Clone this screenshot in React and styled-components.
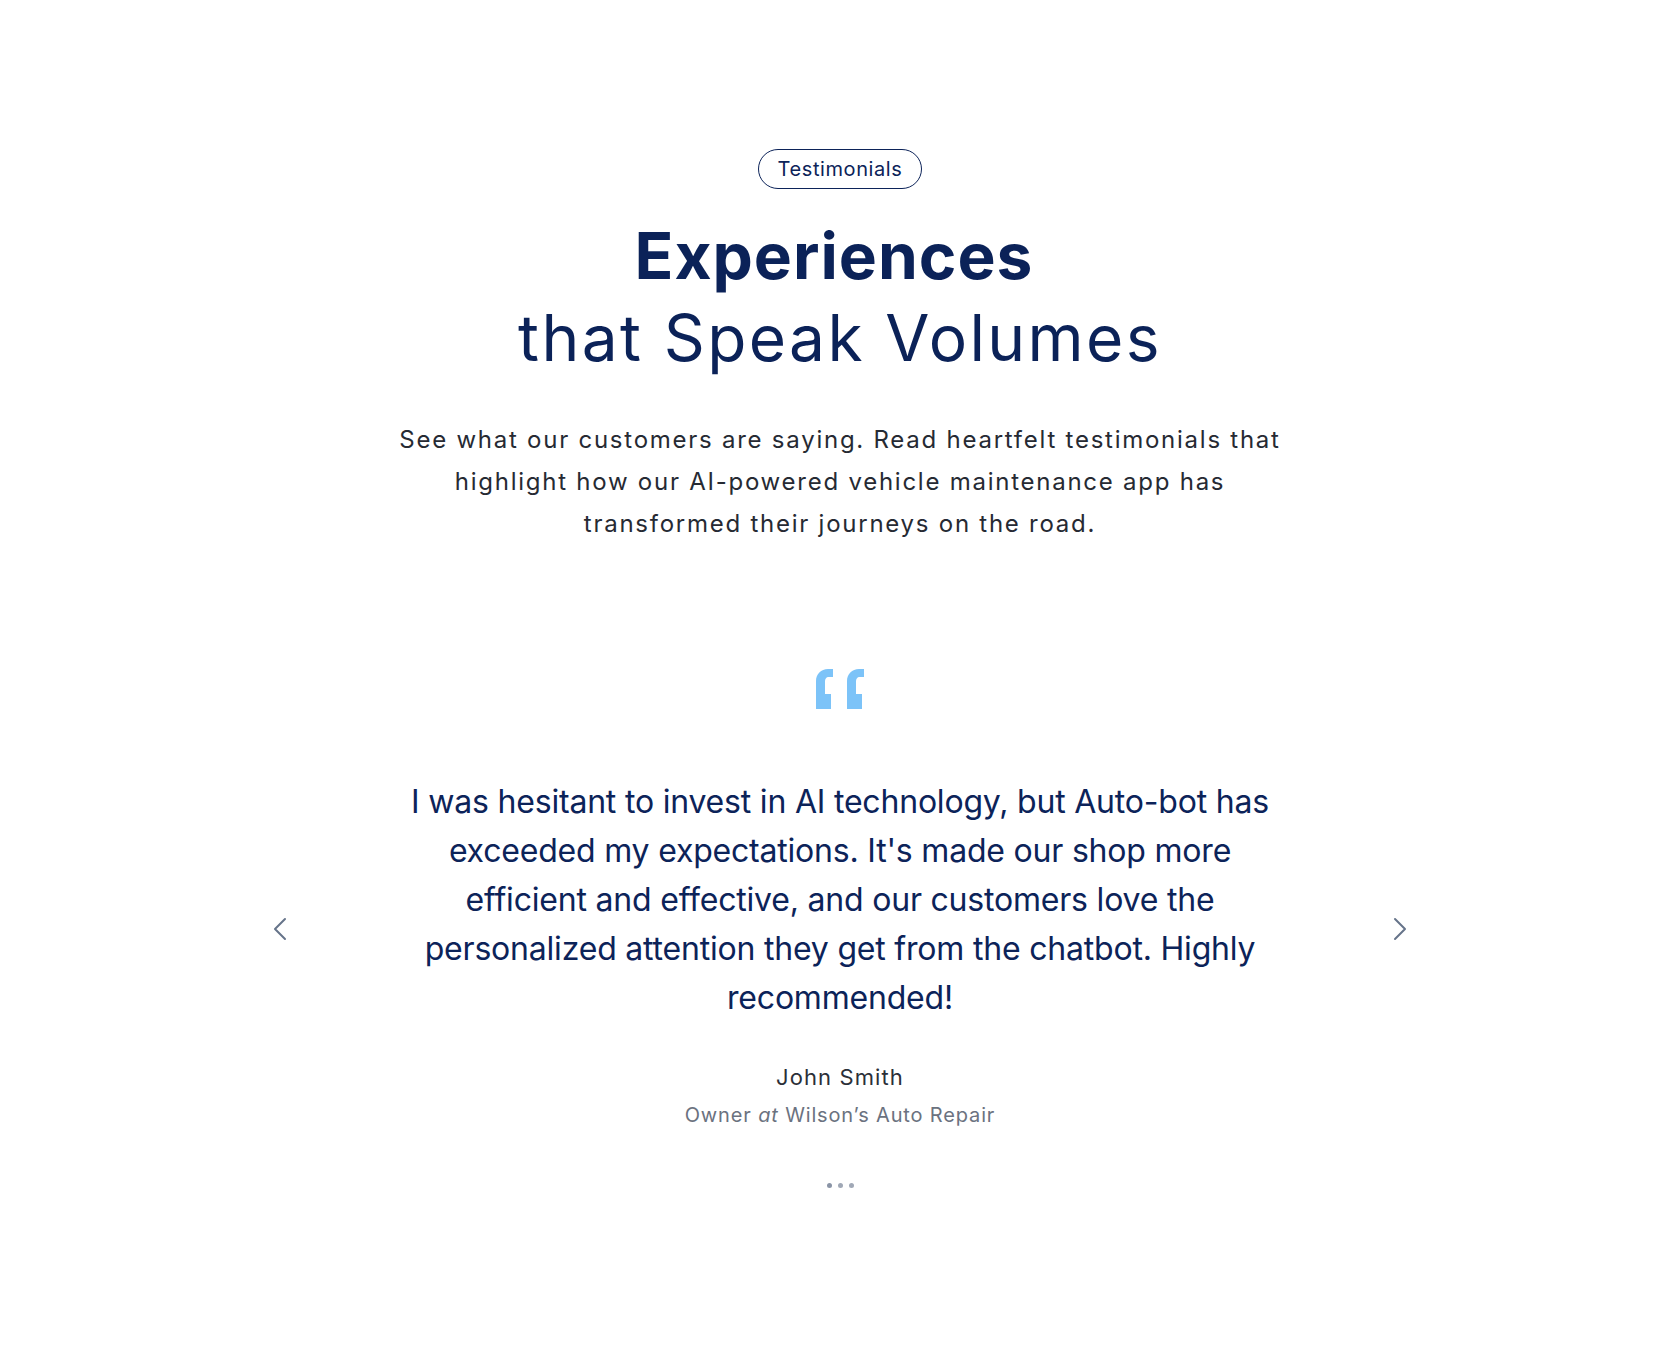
import React from "react";
import styled, { createGlobalStyle } from "styled-components";

const Global = createGlobalStyle`
  html, body { margin: 0; padding: 0; background: #ffffff; }
  body { font-family: Inter, "Noto Sans", sans-serif; -webkit-font-smoothing: antialiased; }
  * { box-sizing: border-box; }
`;

const Section = styled.section`
  display: flex;
  flex-direction: column;
  align-items: center;
  padding: 149px 0 160px;
`;

const Badge = styled.span`
  display: inline-flex;
  align-items: center;
  justify-content: center;
  height: 40px;
  padding: 0 19px;
  border: 1.5px solid #0c2359;
  border-radius: 999px;
  color: #0c2359;
  font-size: 20px;
  line-height: 1;
  letter-spacing: 0.6px;
`;

const Heading = styled.h2`
  margin: 26px 0 0;
  text-align: center;
  color: #0b2258;
  font-size: 64px;
  line-height: 82px;
  font-weight: 400;
  letter-spacing: 2.4px;
`;

const Strong = styled.span`
  display: block;
  font-weight: 700;
  letter-spacing: 1px;
  padding-right: 12px;
`;

const Light = styled.span`
  display: block;
`;

const Lead = styled.p`
  margin: 40px 0 0;
  max-width: 910px;
  text-align: center;
  color: #262a33;
  font-size: 24px;
  line-height: 42px;
  letter-spacing: 1.75px;
`;

const Carousel = styled.div`
  margin-top: 124px;
  width: 1144px;
  display: flex;
  align-items: center;
  justify-content: space-between;
`;

const Arrow = styled.button`
  width: 24px;
  height: 40px;
  padding: 0;
  border: 0;
  background: transparent;
  display: flex;
  align-items: center;
  justify-content: center;
  cursor: pointer;
  color: #66748a;
`;

const Slide = styled.div`
  flex: 1;
  display: flex;
  flex-direction: column;
  align-items: center;
`;

const QuoteMark = styled.svg`
  display: block;
  width: 52px;
  height: 40px;
`;

const QuoteText = styled.blockquote`
  margin: 68px 0 0;
  max-width: 885px;
  text-align: center;
  color: #0c2359;
  font-size: 32px;
  line-height: 49px;
  letter-spacing: -0.2px;
`;

const Name = styled.div`
  margin-top: 39px;
  color: #2b2f38;
  font-size: 22px;
  line-height: 32px;
  letter-spacing: 1.1px;
`;

const Role = styled.div`
  margin-top: 6px;
  color: #6b7280;
  font-size: 20px;
  line-height: 32px;
  letter-spacing: 0.85px;
  em { font-style: italic; }
`;

const Dots = styled.div`
  margin-top: 52px;
  display: flex;
  gap: 6px;
`;

const Dot = styled.span`
  width: 5px;
  height: 5px;
  border-radius: 50%;
  background: ${(p) => (p.$active ? "#8a94a6" : "#a0a8b6")};
`;

const Chevron = ({ dir }) => (
  <svg width="14" height="24" viewBox="0 0 14 24" fill="none">
    <path
      d={dir === "left" ? "M12 2 L2 12 L12 22" : "M2 2 L12 12 L2 22"}
      stroke="currentColor"
      strokeWidth="2"
      strokeLinecap="round"
      strokeLinejoin="round"
    />
  </svg>
);

const Quote = () => (
  <QuoteMark viewBox="0 0 52 40" aria-hidden="true">
    <path
      fill="#7cc3f8"
      d="M2 40 V12 C2 5 7 0 14 0 H19 V8 H15 C12 8 11 10 11 13 V25 H17 V40 Z"
    />
    <path
      fill="#7cc3f8"
      d="M33 40 V12 C33 5 38 0 45 0 H50 V8 H46 C43 8 42 10 42 13 V25 H48 V40 Z"
    />
  </QuoteMark>
);

export default function App() {
  return (
    <>
      <Global />
      <Section>
        <Badge>Testimonials</Badge>
        <Heading>
          <Strong>Experiences</Strong>
          <Light>that Speak Volumes</Light>
        </Heading>
        <Lead>
          See what our customers are saying. Read heartfelt testimonials that
          highlight how our AI-powered vehicle maintenance app has transformed
          their journeys on the road.
        </Lead>
        <Carousel>
          <Arrow aria-label="Previous">
            <Chevron dir="left" />
          </Arrow>
          <Slide>
            <Quote />
            <QuoteText>
              I was hesitant to invest in AI technology, but Auto-bot has
              exceeded my expectations. It's made our shop more efficient and
              effective, and our customers love the personalized attention they
              get from the chatbot. Highly recommended!
            </QuoteText>
            <Name>John Smith</Name>
            <Role>
              Owner <em>at</em> Wilson’s Auto Repair
            </Role>
            <Dots>
              <Dot $active />
              <Dot />
              <Dot />
            </Dots>
          </Slide>
          <Arrow aria-label="Next">
            <Chevron dir="right" />
          </Arrow>
        </Carousel>
      </Section>
    </>
  );
}
